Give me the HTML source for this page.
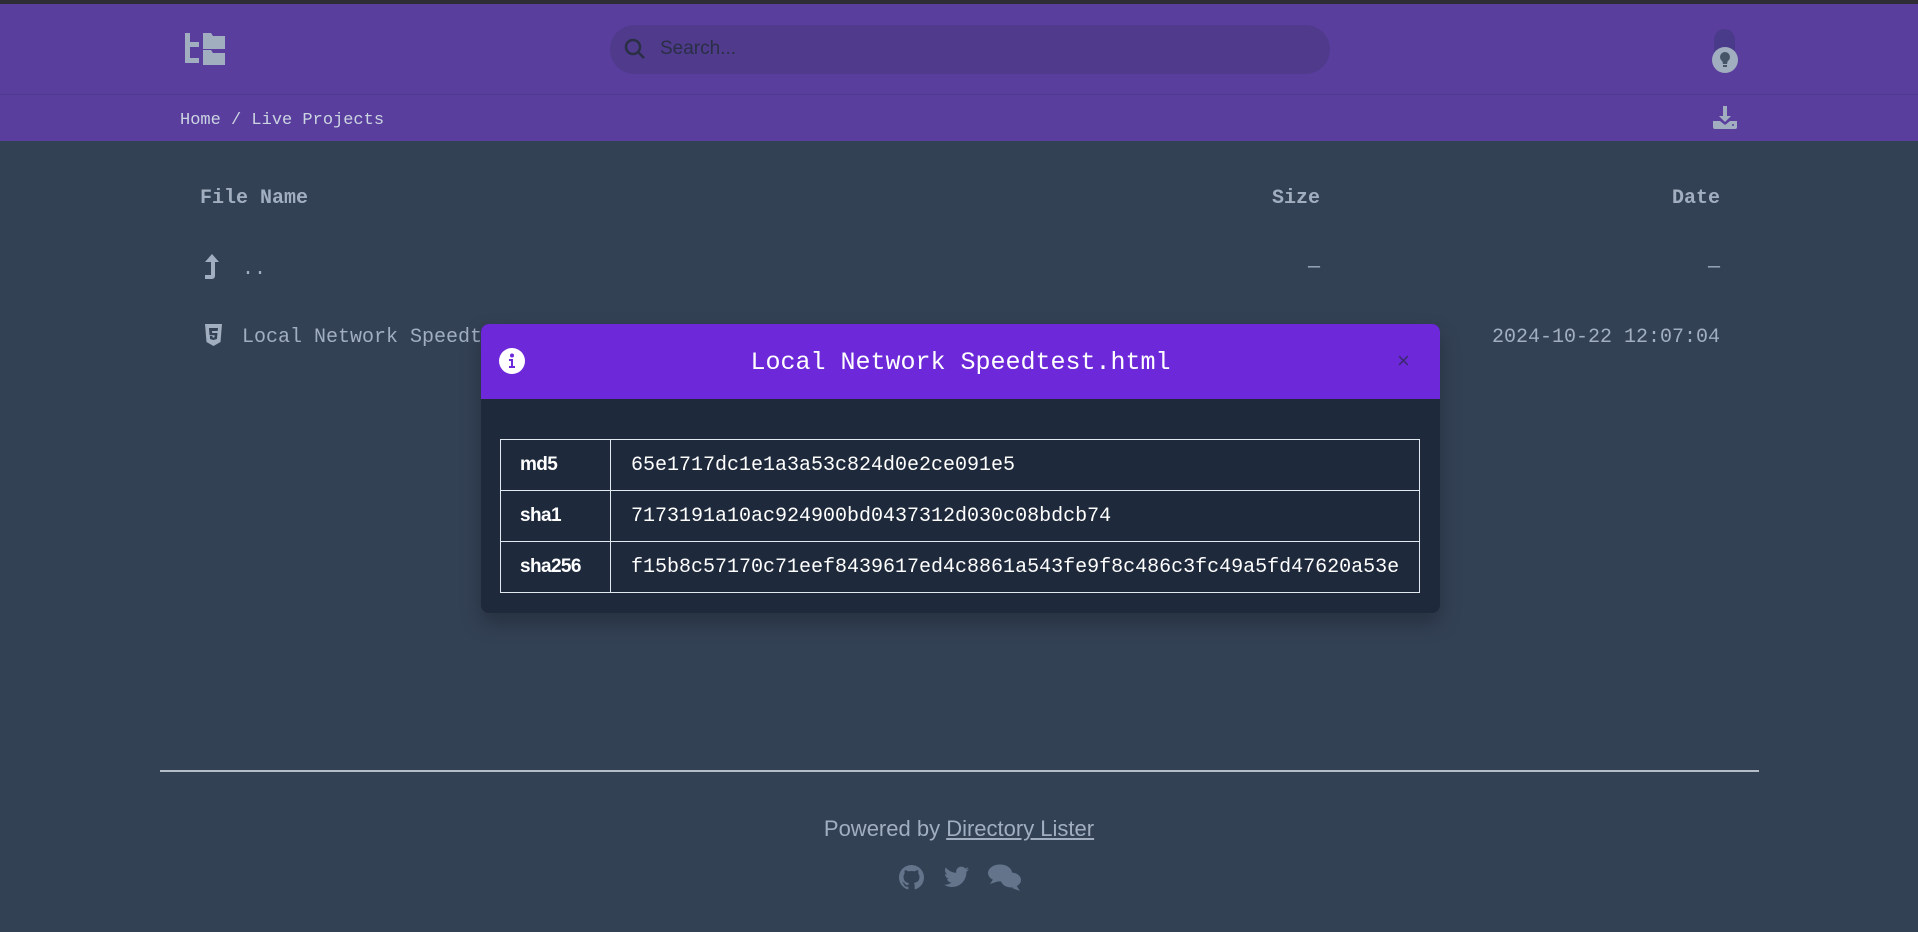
<!DOCTYPE html>
<html><head><meta charset="utf-8"><style>
*{box-sizing:border-box;margin:0;padding:0}
html,body{width:1918px;height:932px;overflow:hidden;background:#334155;font-family:"Liberation Sans",sans-serif;color:#a0aec0}
.top{position:absolute;left:0;top:0;width:1918px;height:4px;background:#2d2d33}
.hdr{position:absolute;left:0;top:4px;width:1918px;height:91px;background:#5a3e9e;border-bottom:1px solid #4f3a92}
.bc{position:absolute;left:0;top:95px;width:1918px;height:46px;background:#5a3e9e}
.mono{font-family:"Liberation Mono",monospace}
.abs{position:absolute}
.search{left:610px;top:21px;width:720px;height:49px;border-radius:25px;background:#4f3a8c}
.search span{position:absolute;left:50px;top:13px;font-size:19px;color:#2a2f45}
.row{font-size:20px;color:#a0aec0}
.modal{left:481px;top:324px;width:959px;height:289px;background:#1e293b;border-radius:8px;overflow:hidden;box-shadow:0 10px 20px rgba(0,0,0,.25)}
.mh{height:75px;background:#6d28d9;position:relative}
table{position:absolute;left:19px;top:115px;width:920px;border-collapse:collapse}
td{border:1px solid #e2e8f0;height:51px;color:#fff;font-size:19px}
td.l{width:110px;padding-left:19px;font-weight:bold;font-size:19px;letter-spacing:-.6px}
td.v{padding-left:20px;font-family:"Liberation Mono",monospace;font-size:20px}
</style></head><body>
<div class="top"></div>
<div class="hdr">
 <svg class="abs" style="left:183px;top:27px" width="44" height="36" viewBox="0 0 44 36" fill="#a0aec0">
  <path d="M2 2h5v9h9v5H7v11h9v5H2z"/><path d="M20 2h8l2 3h12v13H20z"/><path d="M20 19h8l2 3h12v12H20z"/></svg>
 <div class="abs search"><svg class="abs" style="left:14px;top:13px" width="22" height="22" viewBox="0 0 22 22" fill="none" stroke="#2a2f45" stroke-width="2.5"><circle cx="9" cy="9" r="7"/><path d="M14 14l6 6"/></svg><span>Search...</span></div>
 <div class="abs" style="left:1714px;top:25px;width:21px;height:40px;border-radius:11px;background:#4a3a8a"></div>
 <div class="abs" style="left:1712px;top:43px;width:26px;height:26px;border-radius:13px;background:#a0aec0"></div>
 <svg class="abs" style="left:1717px;top:47px" width="16" height="18" viewBox="0 0 16 18" fill="#475569"><circle cx="8" cy="6" r="5"/><path d="M5 9h6l-1 4H6z"/><rect x="6" y="14" width="4" height="2"/></svg>
</div>
<div class="bc">
 <div class="abs mono" style="left:180px;top:16px;font-size:17px;color:#cbd5e1">Home / Live Projects</div>
 <svg class="abs" style="left:1713px;top:11px" width="24" height="23" viewBox="0 0 24 23" fill="#a0aec0"><path d="M10 0h4v10h4l-6 6-6-6h4z"/><path d="M0 15h7l5 4 5-4h7v6a2 2 0 0 1-2 2H2a2 2 0 0 1-2-2z"/><circle cx="20" cy="19" r="1" fill="#5a3e9e"/></svg>
</div>
<div class="abs mono row" style="left:200px;top:187px;font-weight:bold">File Name</div>
<div class="abs mono row" style="right:598px;top:187px;font-weight:bold">Size</div>
<div class="abs mono row" style="right:198px;top:187px;font-weight:bold">Date</div>
<svg class="abs" style="left:204px;top:254px" width="16" height="26" viewBox="0 0 16 26" fill="#a0aec0"><path d="M8 0l7 8h-4v14a3 3 0 0 1-3 3H1v-4h6V8H1z"/></svg>
<div class="abs mono row" style="left:242px;top:258px">..</div>
<div class="abs mono row" style="right:598px;top:256px">—</div>
<div class="abs mono row" style="right:198px;top:256px">—</div>
<svg class="abs" style="left:205px;top:324px" width="17" height="22" viewBox="0 0 17 22" fill="#a0aec0"><path d="M0 0h17l-1.5 18L8.5 22 1.5 18z"/><path d="M4 4h9l-.3 3H7l.2 2h5.3l-.6 6-3.4 1-3.4-1-.2-3h2.5l.1 1.3 1 .3 1-.3.2-2H4.5z" fill="#334155"/></svg>
<div class="abs mono row" style="left:242px;top:326px">Local Network Speedtest.html</div>
<div class="abs mono row" style="right:198px;top:326px">2024-10-22 12:07:04</div>
<div class="abs modal">
 <div class="mh">
  <svg class="abs" style="left:18px;top:24px" width="26" height="26" viewBox="0 0 26 26"><circle cx="13" cy="13" r="13" fill="#fff"/><circle cx="13" cy="7.5" r="2" fill="#6d28d9"/><path d="M10 11h4v7h2v2h-6v-2h2v-5h-2z" fill="#6d28d9"/></svg>
  <div class="abs mono" style="left:0;width:959px;text-align:center;top:24px;font-size:25px;color:#fff">Local Network Speedtest.html</div>
  <div class="abs" style="left:916px;top:24px;font-size:22px;color:#3b2a70">×</div>
 </div>
 <table>
  <tr><td class="l">md5</td><td class="v">65e1717dc1e1a3a53c824d0e2ce091e5</td></tr>
  <tr><td class="l">sha1</td><td class="v">7173191a10ac924900bd0437312d030c08bdcb74</td></tr>
  <tr><td class="l">sha256</td><td class="v">f15b8c57170c71eef8439617ed4c8861a543fe9f8c486c3fc49a5fd47620a53e</td></tr>
 </table>
</div>
<div class="abs" style="left:160px;top:770px;width:1599px;height:2px;background:#b4bcc8"></div>
<div class="abs" style="left:0;width:1918px;text-align:center;top:816px;font-size:22px;color:#a0aec0">Powered by <span style="text-decoration:underline">Directory Lister</span></div>
<svg class="abs" style="left:899px;top:865px" width="25" height="25" viewBox="0 0 16 16" fill="#64748b"><path d="M8 0C3.6 0 0 3.6 0 8c0 3.5 2.3 6.5 5.5 7.6.4.1.5-.2.5-.4v-1.4c-2.2.5-2.700-1-2.7-1-.4-.9-.9-1.2-.9-1.2-.7-.5.1-.5.1-.5.8.1 1.2.8 1.2.8.7 1.3 1.9.9 2.3.7.1-.5.3-.9.5-1.1-1.8-.2-3.6-.9-3.6-4 0-.9.3-1.6.8-2.1-.1-.2-.4-1 .1-2.1 0 0 .7-.2 2.2.8.6-.2 1.3-.3 2-.3s1.4.1 2 .3c1.5-1 2.2-.8 2.2-.8.4 1.1.2 1.900.1 2.1.5.6.8 1.3.8 2.1 0 3.1-1.9 3.7-3.6 3.9.3.3.5.8.5 1.5v2.2c0 .2.1.5.6.4C13.7 14.5 16 11.5 16 8c0-4.4-3.6-8-8-8z"/></svg>
<svg class="abs" style="left:944px;top:866px" width="25" height="22" viewBox="0 0 24 20" fill="#64748b"><path d="M24 2.4c-.9.4-1.8.6-2.8.8 1-.6 1.8-1.6 2.2-2.7-1 .6-2 1-3.1 1.2C19.3.7 18 0 16.6 0c-2.7 0-4.9 2.2-4.900 4.9 0 .4 0 .8.1 1.1C7.7 5.8 4.1 3.9 1.7.9c-.4.7-.7 1.6-.7 2.5 0 1.7.9 3.2 2.2 4.1-.8 0-1.6-.2-2.2-.6v.1c0 2.4 1.7 4.4 3.9 4.8-.4.1-.8.2-1.3.2-.3 0-.6 0-.9-.1.6 2 2.4 3.4 4.6 3.4-1.7 1.3-3.8 2.1-6.1 2.1-.4 0-.8 0-1.2-.1C2.2 18.8 4.8 19.6 7.5 19.6c9.1 0 14-7.5 14-14v-.6c1-.7 1.8-1.6 2.5-2.6z"/></svg>
<svg class="abs" style="left:988px;top:864px" width="34" height="27" viewBox="0 0 34 27" fill="#64748b"><ellipse cx="12" cy="9" rx="12" ry="8.5"/><path d="M2 20l4-6 5 3z"/><ellipse cx="23" cy="16" rx="10" ry="7.5"/><path d="M32 27l-4-6-4 3z"/></svg>
</body></html>
